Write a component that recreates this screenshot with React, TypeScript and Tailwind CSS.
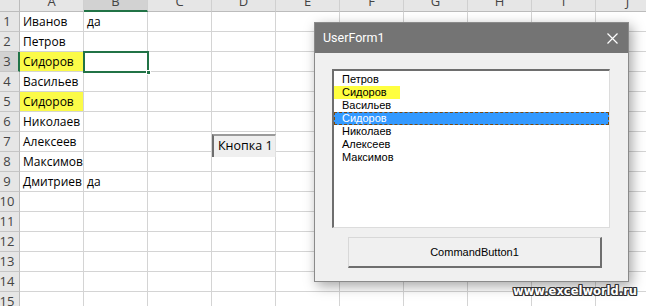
const cols = ["A", "B", "C", "D", "E", "F", "G", "H", "I", "J"];

const cells: Record<string, string> = {
  A1: "Иванов",
  B1: "да",
  A2: "Петров",
  A3: "Сидоров",
  A4: "Васильев",
  A5: "Сидоров",
  A6: "Николаев",
  A7: "Алексеев",
  A8: "Максимов",
  A9: "Дмитриев",
  B9: "да",
};

const yellow = ["A3", "A5"];

const items = ["Петров", "Сидоров", "Васильев", "Сидоров", "Николаев", "Алексеев", "Максимов"];

const Sheet = () => (
  <div className="flex flex-col font-['Open_Sans',sans-serif] text-[12px] text-black">
    {/* column headers (top part scrolled off) */}
    <div className="flex h-[12px]">
      <div className="w-[20px] shrink-0 bg-[#e6e6e6] border-r border-b border-[#bcbcbc]" />
      {cols.map((c) => (
        <div
          key={c}
          className={`w-[64px] shrink-0 overflow-hidden border-r border-[#d0d0d0] ${
            c === "B" ? "bg-[#d2d2d2] border-b-2 border-b-[#217346]" : "bg-[#e6e6e6] border-b border-b-[#bcbcbc]"
          }`}
        >
          <div className="-mt-[8px] h-[20px] flex items-center justify-center text-[13px] text-[#444]">{c}</div>
        </div>
      ))}
    </div>
    {Array.from({ length: 15 }, (_, i) => i + 1).map((r) => (
      <div key={r} className="flex h-[20px]">
        <div
          className={`w-[20px] shrink-0 overflow-hidden border-b border-[#c6c6c6] ${
            r === 3 ? "bg-[#d2d2d2] border-r-2 border-r-[#217346]" : "bg-[#e6e6e6] border-r border-r-[#bcbcbc]"
          }`}
        >
          <div className="-ml-[6px] w-[26px] h-full flex items-center justify-center text-[13px] text-[#444]">{r}</div>
        </div>
        {cols.map((c) => {
          const key = `${c}${r}`;
          const text = cells[key];
          const hl = yellow.includes(key);
          return (
            <div
              key={key}
              className={`relative w-[64px] shrink-0 border-r border-b border-[#d4d4d4] ${hl ? "bg-[#fbfb48]" : ""}`}
            >
              {text && (
                <div
                  className={`absolute left-0 top-0 h-full flex items-center pl-[3px] whitespace-nowrap ${
                    key === "A9" ? "w-[63px] overflow-hidden" : ""
                  } ${hl ? "" : "bg-white"}`}
                >
                  {text}
                </div>
              )}
            </div>
          );
        })}
      </div>
    ))}
  </div>
);

const UserForm = () => (
  <div className="absolute left-[314px] top-[22px] w-[315px] h-[260px] flex flex-col bg-[#f0f0f0] border border-[#8a8a8a] shadow-[3px_4px_12px_rgba(0,0,0,0.35)] font-['Liberation_Sans',sans-serif]">
    <div className="h-[30px] shrink-0 bg-[#747474] flex items-center justify-between pl-[8px] pr-[10px]">
      <span className="text-white text-[12.5px] font-['Roboto',sans-serif]">UserForm1</span>
      <svg width="11" height="11" viewBox="0 0 11 11" stroke="white" strokeWidth="1.2">
        <path d="M0.5 0.5 L10.5 10.5 M10.5 0.5 L0.5 10.5" />
      </svg>
    </div>
    <div className="flex flex-col pt-[16px]">
      <div className="ml-[17px] w-[278px] h-[159px] bg-white border-t-2 border-l-2 border-t-[#6e6e6e] border-l-[#6e6e6e] border-r border-b border-r-[#dcdcdc] border-b-[#dcdcdc] pt-[2px] text-[11px] leading-[13px] text-black">
        {items.map((it, i) =>
          i === 3 ? (
            <div
              key={i}
              className="h-[13px] bg-[#3399ff] text-white pl-[8px] outline-1 outline-dashed outline-offset-[-1px] outline-[#7a4a10]"
            >
              {it}
            </div>
          ) : (
            <div key={i} className="h-[13px] flex">
              <span className={`pl-[8px] ${i === 1 ? "w-[66px] bg-[#ffff40]" : ""}`}>{it}</span>
            </div>
          )
        )}
      </div>
      <div className="ml-[33px] mt-[9px] w-[254px] h-[31px] flex items-center justify-center bg-[#f0f0f0] border-t border-l border-t-[#d8d8d8] border-l-[#d8d8d8] border-r-2 border-b-2 border-r-[#6e6e6e] border-b-[#6e6e6e] text-[11px] text-black">
        CommandButton1
      </div>
    </div>
  </div>
);

export default function App() {
  return (
    <div className="relative w-[646px] h-[306px] overflow-hidden bg-white">
      <Sheet />
      {/* selected cell B3 */}
      <div className="absolute left-[83px] top-[51px] w-[66px] h-[22px] border-2 border-[#217346]" />
      <div className="absolute left-[146px] top-[70px] w-[5px] h-[5px] bg-[#217346] border border-white" />
      {/* sheet button */}
      <div className="absolute left-[212px] top-[134px] w-[64px] h-[23px] flex items-center pl-[4px] bg-[#efefef] border-t-2 border-l-2 border-t-[#9a9a9a] border-l-[#6e6e6e] border-r border-r-[#e0e0e0] font-['Open_Sans',sans-serif] text-[12.5px] text-black">
        Кнопка 1
      </div>
      <UserForm />
      <div className="absolute right-[9px] bottom-[6px] font-['DejaVu_Sans',sans-serif] font-bold text-[11.5px] text-white [text-shadow:1px_0_0_#333,-1px_0_0_#333,0_1px_0_#333,0_-1px_0_#333,1px_1px_0_#333,-1px_-1px_0_#333,1px_-1px_0_#333,-1px_1px_0_#333]">
        www.excelworld.ru
      </div>
    </div>
  );
}
